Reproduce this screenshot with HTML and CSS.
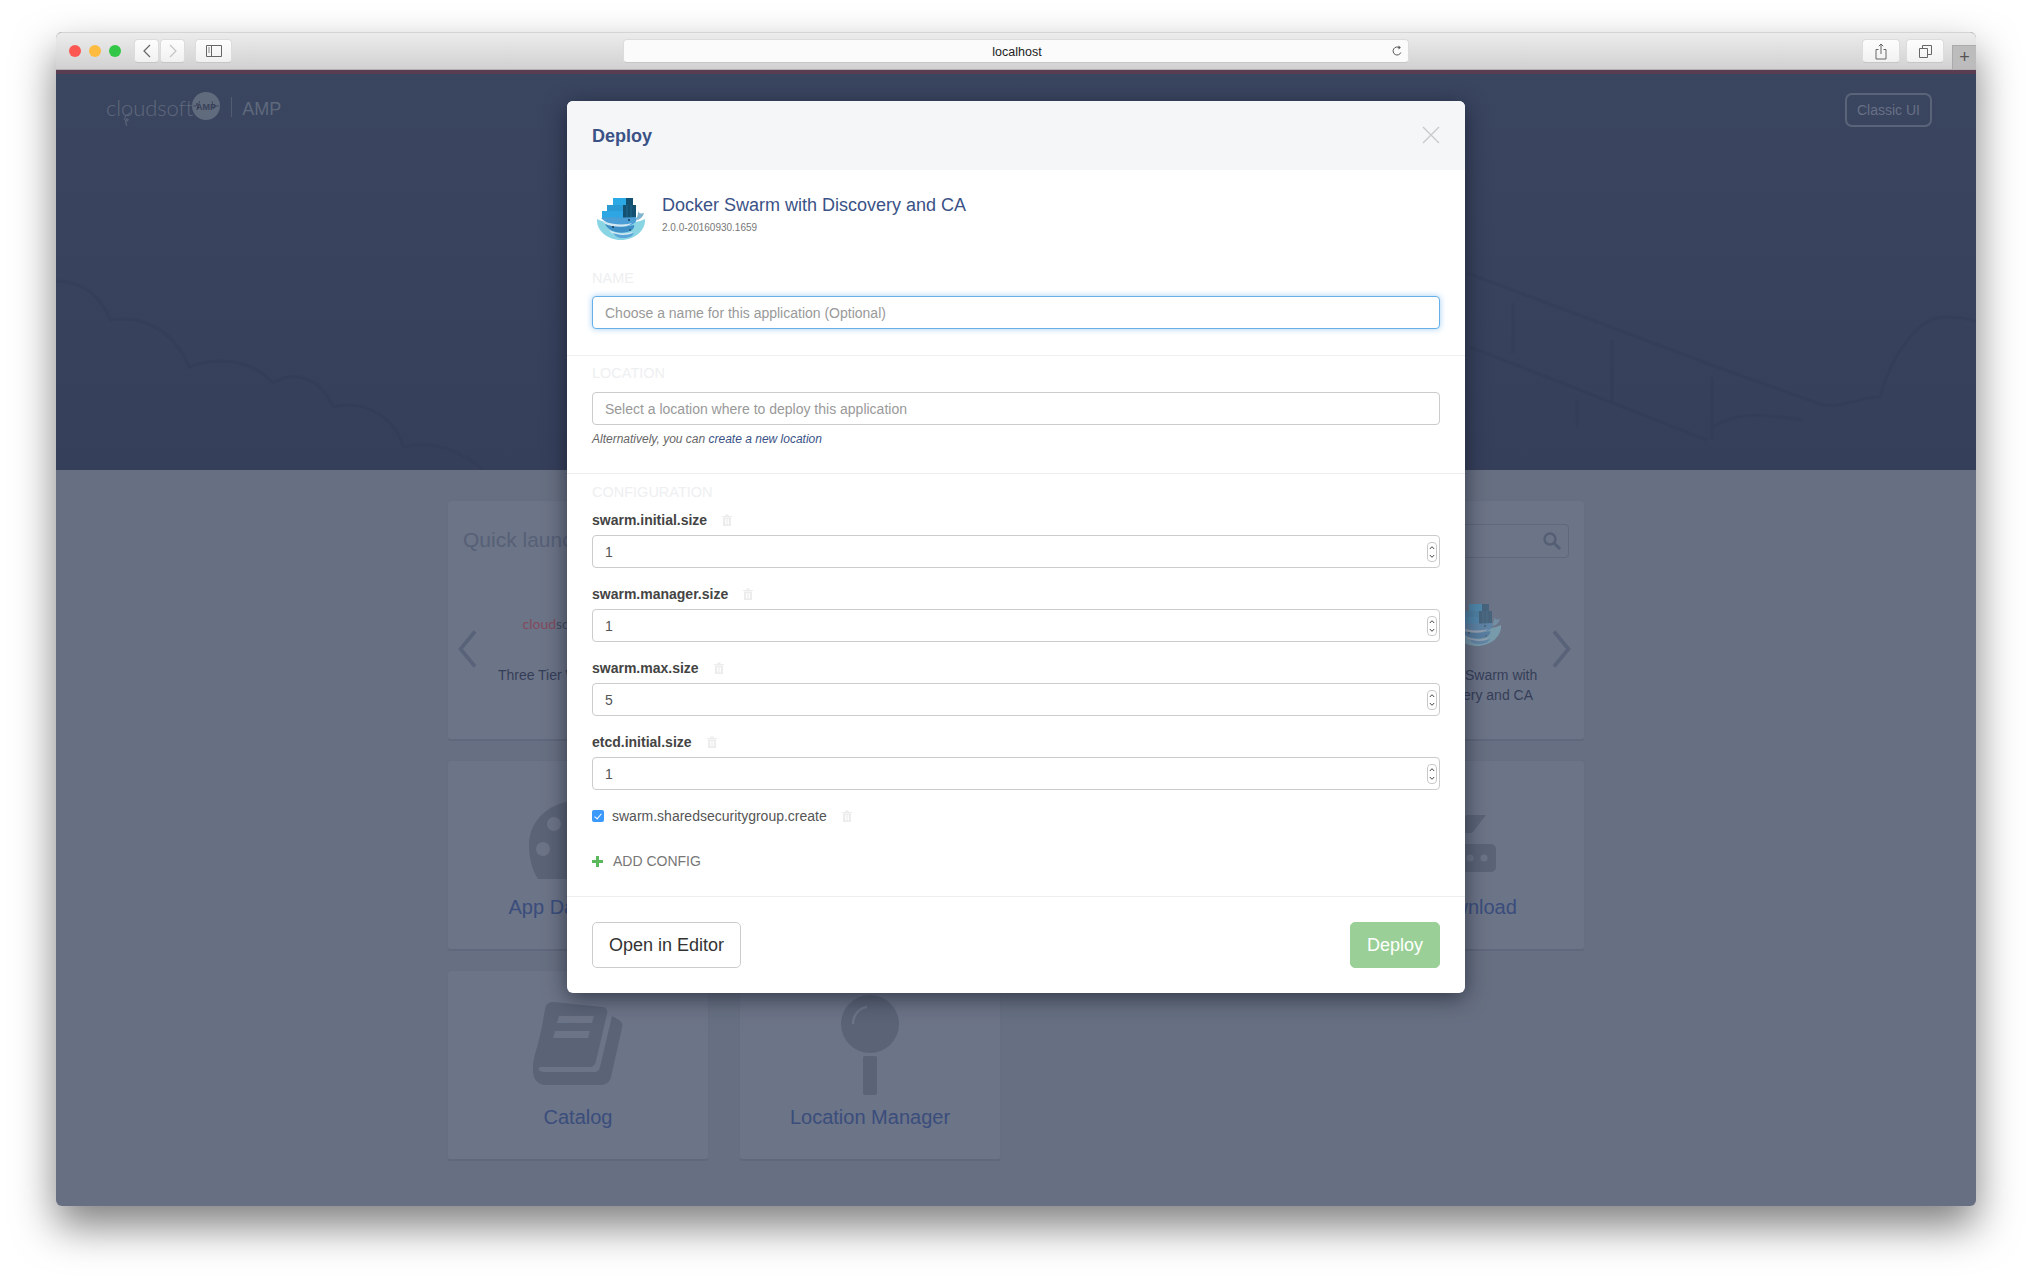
FILE: index.html
```html
<!DOCTYPE html>
<html lang="en">
<head>
<meta charset="utf-8">
<title>Deploy</title>
<link rel="stylesheet" href="styles.css">
</head>
<body>
<svg class="defs" width="0" height="0" aria-hidden="true">
  <symbol id="docker" viewBox="0 0 50 44">
    <path d="M1 22c6 3 13 4 24 4s18-1 24-4c1 11-10 21-24 21S0 33 1 22z" fill="#8ad5e4"/>
    <rect x="17" y="1" width="20" height="7" fill="#2ba9e4"/>
    <rect x="11" y="8" width="19" height="6" fill="#2b9bd6"/>
    <rect x="6" y="14" width="21" height="7" fill="#2ea6e3"/>
    <path d="M27 8h13v14H27zM30 1h7v7h-7z" fill="#14506f"/>
    <path d="M31 8v14M35 8v14" stroke="#2a7aa3" stroke-width=".6"/>
    <path d="M42 13c0 3 2 4 6 3-1 4-4 6-6 7l-2-1c2-3 2-6 2-9z" fill="#7fb4cf"/>
    <path d="M5 21c8-1 24 0 35-1 2 4-1 6-5 8-7 3-22 1-30-7z" fill="#4c9ed6"/>
    <path d="M6 24c8 3 18 4 26 3l4-1c-3 3-8 4-14 4-6 0-12-2-16-6z" fill="#d5e8f2"/>
    <path d="M9 27c7 3 18 4 29 1 1 3-2 6-7 7-7 2-18 0-22-8z" fill="#3f8fc7"/>
    <path d="M13 33c6 3 12 4 19 3l5-1c-3 3-7 4-12 4-5 0-9-2-12-6z" fill="#d5e8f2"/>
    <path d="M17 36c5 2 12 3 21 0-1 3-5 5-11 5-5 0-8-2-10-5z" fill="#5aa5d8"/>
    <circle cx="33" cy="23" r=".9" fill="#12324a"/><circle cx="17" cy="30" r=".9" fill="#12324a"/><circle cx="34" cy="33" r=".8" fill="#12324a"/>
  </symbol>
  <symbol id="trash" viewBox="0 0 10 12">
    <path d="M0 2h10v1H0zM3.500 .5h3V2h-3zM1 3.500h8V12H1zM3 5v5.500h.8V5zm1.600 0v5.500h.8V5zm1.600 0v5.500H7V5z" fill-rule="evenodd"/>
  </symbol>
  <symbol id="spin" viewBox="0 0 10 20">
    <rect x=".5" y=".5" width="9" height="19" rx="3.500" fill="#fff" stroke="#c8c8c8"/>
    <path d="M2.800 7l2.200-2.300L7.200 7M2.800 13l2.200 2.300L7.200 13" fill="none" stroke="#444" stroke-width="1"/>
  </symbol>
</svg>

<div class="window">
  <div class="toolbar">
    <span class="light red"></span><span class="light amber"></span><span class="light green"></span>
    <div class="nav">
      <span class="tool-btn nav-btn"><svg width="10" height="14" viewBox="0 0 10 14"><path d="M8 1L2 7l6 6" fill="none" stroke="#666" stroke-width="1.200"/></svg></span>
      <span class="tool-btn nav-btn"><svg width="10" height="14" viewBox="0 0 10 14"><path d="M2 1l6 6-6 6" fill="none" stroke="#c4c4c4" stroke-width="1.200"/></svg></span>
    </div>
    <span class="tool-btn side-btn"><svg width="16" height="12" viewBox="0 0 16 12"><path d="M.5.5h15v11H.5zM5.500.5v11" fill="none" stroke="#666"/><path d="M2 3h2M2 5h2M2 7h2" stroke="#888"/></svg></span>
    <div class="url">
      <span class="url-text">localhost</span>
      <svg class="reload" width="12" height="12" viewBox="0 0 12 12"><path d="M9.800 7.500A4 4 0 1 1 8.500 2.800" fill="none" stroke="#555"/><path d="M7.500 .5l2.300 2-2.300 2z" fill="#555"/></svg>
    </div>
    <span class="tool-btn wide-btn"><svg width="12" height="17" viewBox="0 0 12 17"><path d="M3.500 6.500H1v9.500h10V6.500H8.500M6 11V1M3.800 3.200L6 1l2.200 2.200" fill="none" stroke="#666"/></svg></span>
    <span class="tool-btn wide-btn tabs-btn"><svg width="13" height="13" viewBox="0 0 13 13"><path d="M.5 3.500h8v9h-8zM3.500 3.500v-3h9v9h-4" fill="none" stroke="#666"/></svg></span>
    <span class="plus-tab">+</span>
  </div>
  <div class="accent"></div>

  <div class="hero">
    <svg class="hero-art" viewBox="0 0 1920 396" preserveAspectRatio="none" aria-hidden="true">
      <g fill="none" stroke="#323b55" stroke-width="3">
        <path d="M0 207c30 0 45 18 55 39 35-6 65 14 78 47 37-13 67-3 84 16 23-14 48-4 60 24 33-8 63 12 70 40 33-8 63 7 80 23"/>
        <path d="M1411 199l250 94 100 36c20 8 40-6 63-6 13-47 40-80 65-80 25 0 45 8 55 16"/>
        <path d="M1414 273l237 93M1457 229v50M1556 266v63M1656 303v63M1521 326v27M1657 353c20-14 47-14 90-7"/>
      </g>
    </svg>
    <div class="hero-bar">
      <div class="brand">
        <span class="brand-word">cloudsoft</span>
        <svg class="brand-tail" width="12" height="14" viewBox="0 0 12 14"><path d="M9 1C5 3 3 6 4 8c1 2 4 1 3-1-1-1-3 1-2 5l1 2" fill="none" stroke="#616b7e" stroke-width="1"/></svg>
        <svg class="brand-mark" width="28" height="28" viewBox="0 0 28 28"><circle cx="14" cy="14" r="14" fill="#616b7e"/><text x="14" y="17.500" class="mark-text" text-anchor="middle">AMP</text><path d="M1 14h3l1-3 1 6 1.500-8M20 9l1.500 8 1-3H27" fill="none" stroke="#384158" stroke-width=".8"/></svg>
        <span class="brand-sep"></span>
        <span class="brand-amp">AMP</span>
      </div>
      <span class="classic">Classic UI</span>
    </div>
  </div>

  <div class="content">
    <div class="grid">
      <section class="card quick">
        <div class="quick-head">
          <h2 class="quick-title">Quick launch</h2>
          <div class="search"><svg width="20" height="20" viewBox="0 0 20 20"><circle cx="8" cy="8" r="5.500" fill="none" stroke="#545e74" stroke-width="2.400"/><path d="M12 12l6 6" stroke="#545e74" stroke-width="3"/></svg></div>
        </div>
        <div class="carousel">
          <svg class="chev" width="19" height="38" viewBox="0 0 19 38"><path d="M17 1.500L2.500 19 17 36.500" fill="none" stroke="#586379" stroke-width="3.600"/></svg>
          <div class="launch">
            <div class="launch-icon"><span class="mini-logo"><span class="mini-red">cloud</span>soft</span></div>
            <p class="launch-name">Three Tier Web App</p>
          </div>
          <div class="launch launch-end">
            <div class="launch-icon"><svg class="dim-docker" width="50" height="44"><use href="#docker"/></svg></div>
            <p class="launch-name">Docker Swarm with Discovery and CA</p>
          </div>
          <svg class="chev" width="19" height="38" viewBox="0 0 19 38"><path d="M2 1.500L16.500 19 2 36.500" fill="none" stroke="#586379" stroke-width="3.600"/></svg>
        </div>
      </section>

      <section class="card tile">
        <svg class="tile-icon" width="100" height="100" viewBox="0 0 100 100"><path d="M50 16C23 16 1 34 1 60c0 13 3 25 9 34h80c6-9 9-21 9-34 0-26-22-44-49-44z" fill="#5b6477"/><circle cx="26" cy="39" r="7" fill="#6c7487"/><circle cx="15" cy="64" r="7" fill="#6c7487"/></svg>
        <h3 class="tile-name">App Dashboard</h3>
      </section>
      <section class="card tile">
        <svg class="tile-icon" width="100" height="100"></svg>
        <h3 class="tile-name">Blueprint Composer</h3>
      </section>
      <section class="card tile">
        <svg class="tile-icon" width="100" height="100"></svg>
        <h3 class="tile-name">REST API Docs</h3>
      </section>
      <section class="card tile">
        <svg class="tile-icon" width="100" height="100" viewBox="0 0 100 100"><path d="M62 30h20L68 48H50z" fill="#5b6477"/><rect x="8" y="59" width="84" height="28" rx="5" fill="#5b6477"/><circle cx="66" cy="73" r="3.600" fill="#6c7487"/><circle cx="80" cy="73" r="3.600" fill="#6c7487"/></svg>
        <h3 class="tile-name">CLI Download</h3>
      </section>

      <section class="card tile">
        <svg class="tile-icon" width="100" height="100" viewBox="0 0 100 100"><g transform="translate(-2 -2)"><path d="M27 9c-5 0-7 3-8 7l-2 12-2 10-3 13-3 10-2 10v7c0 8 5 14 13 14h55c5 0 9-3 10-8l11-49c1-3 0-6-3-8l-7-4-12 51c-1 4-3 5-6 5H18c-5 0-7-3-4-5h49c4 0 6-2 7-6l11-47c1-4-1-7-5-7z" fill="#5b6477"/><path d="M33 23h35l-2 7H31zM29 38h35l-2 7H27z" fill="#6c7487"/></g></svg>
        <h3 class="tile-name">Catalog</h3>
      </section>
      <section class="card tile">
        <svg class="tile-icon" width="100" height="100" viewBox="0 0 100 100"><circle cx="50" cy="29" r="29" fill="#5b6477"/><path d="M33 29c0-9 6-16 14-17" fill="none" stroke="#6c7487" stroke-width="2.500"/><rect x="43" y="61" width="14" height="39" rx="2" fill="#5b6477"/></svg>
        <h3 class="tile-name">Location Manager</h3>
      </section>
    </div>
  </div>

  <div class="overlay">
    <div class="modal">
      <header class="modal-head">
        <h1 class="modal-title">Deploy</h1>
        <svg class="close" width="18" height="18" viewBox="0 0 18 18"><path d="M1 1l16 16M17 1L1 17" stroke="#c9c9c9" stroke-width="1.300" fill="none"/></svg>
      </header>

      <div class="section first">
        <div class="app">
          <svg class="app-icon" width="50" height="44"><use href="#docker"/></svg>
          <div class="app-meta">
            <div class="app-name">Docker Swarm with Discovery and CA</div>
            <div class="app-version">2.0.0-20160930.1659</div>
          </div>
        </div>
        <div class="section-label">NAME</div>
        <input class="field focused" type="text" placeholder="Choose a name for this application (Optional)">
      </div>

      <div class="section location">
        <div class="section-label">LOCATION</div>
        <input class="field" type="text" placeholder="Select a location where to deploy this application">
        <p class="help">Alternatively, you can <a class="help-link" href="#">create a new location</a></p>
      </div>

      <div class="section config">
        <div class="section-label">CONFIGURATION</div>
        <div class="cfg">
          <div class="cfg-label"><b>swarm.initial.size</b><svg class="trash" width="10" height="12"><use href="#trash"/></svg></div>
          <div class="num"><input class="field" type="text" value="1"><svg class="spin" width="10" height="20"><use href="#spin"/></svg></div>
        </div>
        <div class="cfg">
          <div class="cfg-label"><b>swarm.manager.size</b><svg class="trash" width="10" height="12"><use href="#trash"/></svg></div>
          <div class="num"><input class="field" type="text" value="1"><svg class="spin" width="10" height="20"><use href="#spin"/></svg></div>
        </div>
        <div class="cfg">
          <div class="cfg-label"><b>swarm.max.size</b><svg class="trash" width="10" height="12"><use href="#trash"/></svg></div>
          <div class="num"><input class="field" type="text" value="5"><svg class="spin" width="10" height="20"><use href="#spin"/></svg></div>
        </div>
        <div class="cfg">
          <div class="cfg-label"><b>etcd.initial.size</b><svg class="trash" width="10" height="12"><use href="#trash"/></svg></div>
          <div class="num"><input class="field" type="text" value="1"><svg class="spin" width="10" height="20"><use href="#spin"/></svg></div>
        </div>
        <label class="check">
          <input class="check-box" type="checkbox" checked>
          <span>swarm.sharedsecuritygroup.create</span>
          <svg class="trash" width="10" height="12"><use href="#trash"/></svg>
        </label>
        <div class="add">
          <svg width="11" height="11" viewBox="0 0 11 11"><path d="M4 0h3v4h4v3H7v4H4V7H0V4h4z" fill="#5cb85c"/></svg>
          <span>ADD CONFIG</span>
        </div>
      </div>

      <footer class="modal-foot">
        <button class="btn btn-plain" type="button">Open in Editor</button>
        <button class="btn btn-deploy" type="button">Deploy</button>
      </footer>
    </div>
  </div>
</div>
</body>
</html>
```

FILE: styles.css
```css
* { box-sizing: border-box; }
html, body { margin: 0; padding: 0; }
body {
  background: #fff;
  padding: 32px 56px 0;
  height: 1285px;
  overflow: hidden;
  font-family: "Liberation Sans", Arial, sans-serif;
  font-size: 14px;
}
.defs { position: absolute; }

.window {
  position: relative;
  width: 1920px;
  height: 1174px;
  border-radius: 6px;
  background: #677082;
  box-shadow: 0 20px 42px rgba(0,0,0,.5);
  display: flex;
  flex-direction: column;
}

/* browser chrome */
.toolbar {
  height: 38px;
  flex: none;
  display: flex;
  align-items: center;
  padding-left: 13px;
  position: relative;
  border-radius: 6px 6px 0 0;
  background: linear-gradient(#ececec, #d2d1d1);
  border-top: 1px solid #d4d4d4;
  border-bottom: 1px solid #b1b1b1;
}
.light { width: 12px; height: 12px; border-radius: 50%; margin-right: 8px; }
.red { background: #fc5753; }
.amber { background: #fdbc40; }
.green { background: #33c748; margin-right: 13px; }
.nav { display: flex; gap: 1px; margin-right: 10px; }
.tool-btn {
  height: 24px;
  display: flex;
  align-items: center;
  justify-content: center;
  background: linear-gradient(#fdfdfd, #f1f1f1);
  border-radius: 4px;
  border: 1px solid #dcdcdc;
  border-bottom-color: #c6c6c6;
}
.nav-btn { width: 25px; }
.side-btn { width: 37px; }
.url {
  width: 786px;
  height: 24px;
  margin-left: 391px;
  margin-right: 453px;
  position: relative;
  display: flex;
  align-items: center;
  justify-content: center;
  background: #fbfbfb;
  border-radius: 4px;
  border: 1px solid #dcdcdc;
  border-bottom-color: #c6c6c6;
}
.url-text { font-size: 12.500px; color: #222; margin-top: 1px; margin-left: 2px; }
.reload { position: absolute; right: 5px; top: 5px; }
.wide-btn { width: 38px; flex: none; }
.tabs-btn { margin-left: 6px; }
.plus-tab {
  position: absolute;
  right: 0;
  bottom: 0;
  width: 24px;
  height: 24px;
  display: flex;
  align-items: center;
  justify-content: center;
  background: #bdbcbc;
  border-left: 1px solid #aaa;
  border-top: 1px solid #aaa;
  color: #555;
  font-size: 18px;
  font-weight: 400;
}
.accent { height: 4px; flex: none; background: #5a3d50; }

/* hero */
.hero {
  height: 396px;
  flex: none;
  position: relative;
  background: linear-gradient(#3a4560, #363f5a);
}
.hero-art { position: absolute; inset: 0; width: 100%; height: 100%; opacity: .4; }
.hero-bar {
  position: relative;
  display: flex;
  justify-content: space-between;
  align-items: flex-start;
  padding: 19px 44px 0 50px;
}
.brand { position: relative; display: flex; align-items: center; height: 28px; color: #5f697c; }
.brand-word { font-family: Lato, sans-serif; font-weight: 300; font-size: 22px; letter-spacing: -.1px; }
.brand-tail { position: absolute; left: 15px; top: 19px; }
.brand-mark { margin-left: -1px; margin-top: -3px; flex: none; }
.mark-text { font: 700 9px "Liberation Sans", sans-serif; fill: #384158; }
.brand-sep { width: 1px; height: 20px; background: #535d72; margin: 0 10px 0 11px; }
.brand-amp { font-size: 18px; margin-top: 5px; }
.classic {
  width: 87px;
  height: 34px;
  display: flex;
  align-items: center;
  justify-content: center;
  border: 2px solid #5a6478;
  border-radius: 7px;
  color: #687185;
  font-size: 14px;
}

/* page behind the dialog */
.content { flex: 1; padding-top: 30px; }
.grid {
  width: 1138px;
  margin: 0 auto;
  display: grid;
  grid-template-columns: repeat(4, 1fr);
  column-gap: 30px;
  row-gap: 19px;
}
.card {
  background: #6c7487;
  border: 1px solid #666e82;
  border-bottom: 2px solid #5f687c;
  border-radius: 4px;
}
.quick { grid-column: 1 / -1; height: 241px; padding: 24px 15px 0 16px; }
.quick-head { display: flex; justify-content: space-between; align-items: center; height: 34px; margin-top: -1px; }
.quick-title { margin: -2px 0 0 -1px; font-size: 21px; font-weight: 400; color: #566076; }
.search {
  width: 250px;
  height: 34px;
  border: 1px solid #5f687c;
  border-radius: 4px;
  display: flex;
  align-items: center;
  justify-content: flex-end;
  padding-right: 6px;
}
.carousel {
  display: flex;
  align-items: flex-start;
  gap: 8px;
  margin-top: 42px;
  margin-left: -6px;
  margin-right: -2px;
}
.chev { margin-top: 30px; flex: none; }
.launch { width: 150px; text-align: center; }
.launch-end { margin-left: auto; margin-right: -8px; }
.launch-icon { height: 50px; display: flex; align-items: center; justify-content: center; margin-bottom: 15px; }
.launch-name { margin: 0; line-height: 20px; color: #353e58; }
.mini-logo { font-family: Lato, sans-serif; font-size: 14px; color: #444c60; margin-right: 18px; margin-bottom: 4px; }
.mini-red { color: #834a5c; }
.dim-docker { opacity: .4; }
.tile { height: 191px; padding-top: 24px; display: flex; flex-direction: column; align-items: center; }
.tile-icon { flex: none; }
.tile-name { margin: 9px 0 0; font-size: 20px; line-height: 26px; font-weight: 400; color: #3a4d7c; }

/* dialog */
.overlay {
  position: absolute;
  inset: 0;
  display: flex;
  justify-content: center;
  align-items: flex-start;
  padding-top: 69px;
}
.modal {
  width: 898px;
  background: #fff;
  border-radius: 6px;
  box-shadow: 0 5px 22px rgba(15,20,35,.6);
  overflow: hidden;
}
.modal-head {
  height: 69px;
  padding: 0 25px;
  background: #f5f6f8;
  display: flex;
  align-items: center;
  justify-content: space-between;
}
.modal-title { margin: 1px 0 0; font-size: 18px; font-weight: 700; color: #3a5286; }
.close { margin-top: -2px; }
.section { padding: 0 25px; border-bottom: 1px solid #eeeeee; }
.first { padding-top: 24px; padding-bottom: 26px; }
.location { padding-top: 7px; padding-bottom: 27px; }
.config { padding-top: 8px; padding-bottom: 25px; }
.app { display: flex; align-items: flex-start; margin-bottom: 27px; }
.app-icon { margin: 3px 16px 0 4px; flex: none; }
.app-name { font-size: 18px; line-height: 22px; color: #3a5286; }
.app-version { font-size: 10px; line-height: 14px; margin-top: 5px; color: #777; }
.section-label { font-size: 14.500px; line-height: 20px; color: #eeeff1; margin-bottom: 8px; }
.location .section-label { margin-bottom: 9px; }
.config .section-label { margin-bottom: 8px; }
.field {
  display: block;
  width: 100%;
  height: 33px;
  padding: 0 12px;
  border: 1px solid #ccc;
  border-radius: 4px;
  background: #fff;
  font: 14px "Liberation Sans", Arial, sans-serif;
  color: #555;
  outline: none;
}
.field::placeholder { color: #999; opacity: 1; }
.focused { border-color: #66afe9; box-shadow: 0 0 6px rgba(102,175,233,.6); }
.help { margin: 7px 0 0; font-size: 12px; line-height: 14px; font-style: italic; color: #666; }
.help-link { color: #3a5286; text-decoration: none; }
.cfg { margin-bottom: 16px; }
.cfg-label { display: flex; align-items: center; height: 20px; margin-bottom: 5px; color: #444; }
.trash { fill: #ececec; margin-left: 15px; flex: none; }
.num { position: relative; }
.spin { position: absolute; right: 3px; top: 7px; }
.check { display: flex; align-items: center; height: 20px; color: #555; }
.check-box {
  appearance: none;
  position: relative;
  width: 12px;
  height: 12px;
  margin: 0 8px 0 0;
  border-radius: 2px;
  background: #3b99fc;
}
.check-box::after {
  content: "";
  position: absolute;
  left: 4px;
  top: 2px;
  width: 3px;
  height: 6px;
  border: solid #fff;
  border-width: 0 1.500px 1.500px 0;
  transform: rotate(40deg);
}
.add { display: flex; align-items: center; height: 20px; margin-top: 25px; color: #777; }
.add span { margin-left: 10px; }
.modal-foot {
  padding: 25px;
  display: flex;
  justify-content: space-between;
}
.btn {
  height: 46px;
  padding: 0 16px;
  border-radius: 5px;
  font: 18px "Liberation Sans", Arial, sans-serif;
}
.btn-plain { background: #fff; border: 1px solid #ccc; color: #333; }
.btn-deploy { background: #9ad097; border: 1px solid #9ad097; color: #fff; }
```
